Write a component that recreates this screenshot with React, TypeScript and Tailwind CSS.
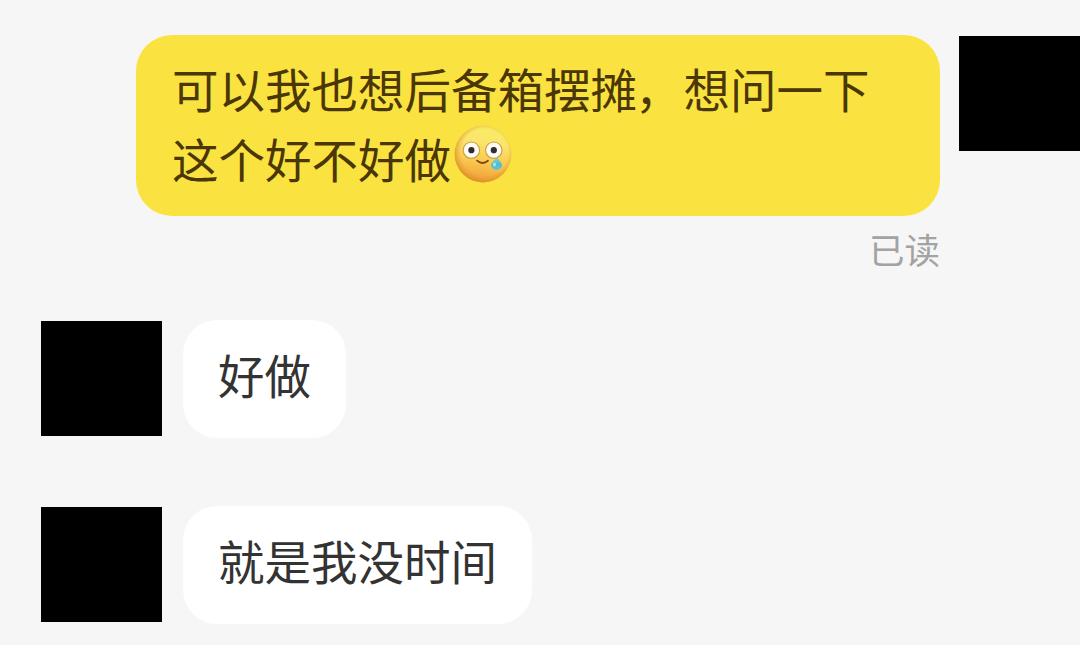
import type { ReactNode } from 'react'

function Avatar({ className = '' }: { className?: string }) {
  return <div className={`h-[115px] w-[121px] shrink-0 bg-black ${className}`} />
}

function TearyFace() {
  return (
    <svg
      viewBox="0 0 58 58"
      className="ml-[3px] -mt-[23px] inline-block h-[58px] w-[58px] align-middle"
      role="img"
      aria-label="teary face"
    >
      <defs>
        <linearGradient id="skin" x1="0.58" y1="0" x2="0.42" y2="1">
          <stop offset="0" stopColor="#f8ec62" />
          <stop offset="0.3" stopColor="#fbe56c" />
          <stop offset="0.62" stopColor="#fbca51" />
          <stop offset="1" stopColor="#f19a36" />
        </linearGradient>
        <radialGradient id="shade" cx="0.53" cy="0.47" r="0.54">
          <stop offset="0.76" stopColor="#e59a29" stopOpacity="0" />
          <stop offset="1" stopColor="#cf8a20" stopOpacity="0.7" />
        </radialGradient>
        <linearGradient id="tear" x1="0" y1="0" x2="0" y2="1">
          <stop offset="0" stopColor="#8fd0bd" />
          <stop offset="0.6" stopColor="#4fbdd0" />
          <stop offset="1" stopColor="#60c6d8" />
        </linearGradient>
      </defs>
      <circle cx="29" cy="29" r="28.4" fill="url(#skin)" />
      <circle cx="29" cy="29" r="28.4" fill="url(#shade)" />
      <circle cx="17.4" cy="25.2" r="8.2" fill="#fffdf2" stroke="#c5a052" strokeWidth="1.1" />
      <circle cx="39.8" cy="25.2" r="8.2" fill="#fffdf2" stroke="#c5a052" strokeWidth="1.1" />
      <circle cx="17.4" cy="25.2" r="3.1" fill="#302c38" />
      <circle cx="39.8" cy="25.2" r="3.1" fill="#302c38" />
      <path d="M23 35.6Q28.6 40.2 34 35.8" fill="none" stroke="#784914" strokeWidth="1.8" strokeLinecap="round" />
      <path d="M42.8 31.5C43.8 35.5 48 36.8 48 40A5.5 5 0 0 1 37 40C37 36.8 41.8 35.5 42.8 31.5Z" fill="url(#tear)" />
      <ellipse cx="40.5" cy="39.5" rx="1.5" ry="2" fill="#b5e2dc" />
    </svg>
  )
}

function IncomingMessage({ children }: { children: ReactNode }) {
  return (
    <div className="flex items-start gap-[21px] pl-[41px]">
      <Avatar />
      <div className="-mt-px h-[118px] rounded-[34px] bg-white px-[35px] pt-[19px] text-[46.5px] leading-[70px] text-[#333333]">
        {children}
      </div>
    </div>
  )
}

export default function App() {
  return (
    <main className="h-[645px] w-[1080px] overflow-hidden bg-[#f6f6f6] pt-[35px] font-['Noto_Sans_CJK_SC',sans-serif]">
      <div className="flex items-start justify-end gap-[19px]">
        <div className="flex flex-col items-end">
          <div className="h-[181px] w-[804px] rounded-[36px] bg-[#fae340] pt-[18px] pl-[36px] text-[46.5px] leading-[70px] whitespace-nowrap text-[#4b3706]">
            <p className="h-[70px]">
              可以我也想后备箱摆摊<span className="relative -left-[2px]">，</span>想问一下
            </p>
            <p className="h-[70px]">
              这个好不好做
              <TearyFace />
            </p>
          </div>
          <span className="mt-[7px] h-[52px] text-[35.5px] leading-[52px] text-[#a3a3a3]">已读</span>
        </div>
        <Avatar className="mt-px" />
      </div>
      <div className="mt-[46px] flex flex-col gap-[69px]">
        <IncomingMessage>好做</IncomingMessage>
        <IncomingMessage>就是我没时间</IncomingMessage>
      </div>
    </main>
  )
}
